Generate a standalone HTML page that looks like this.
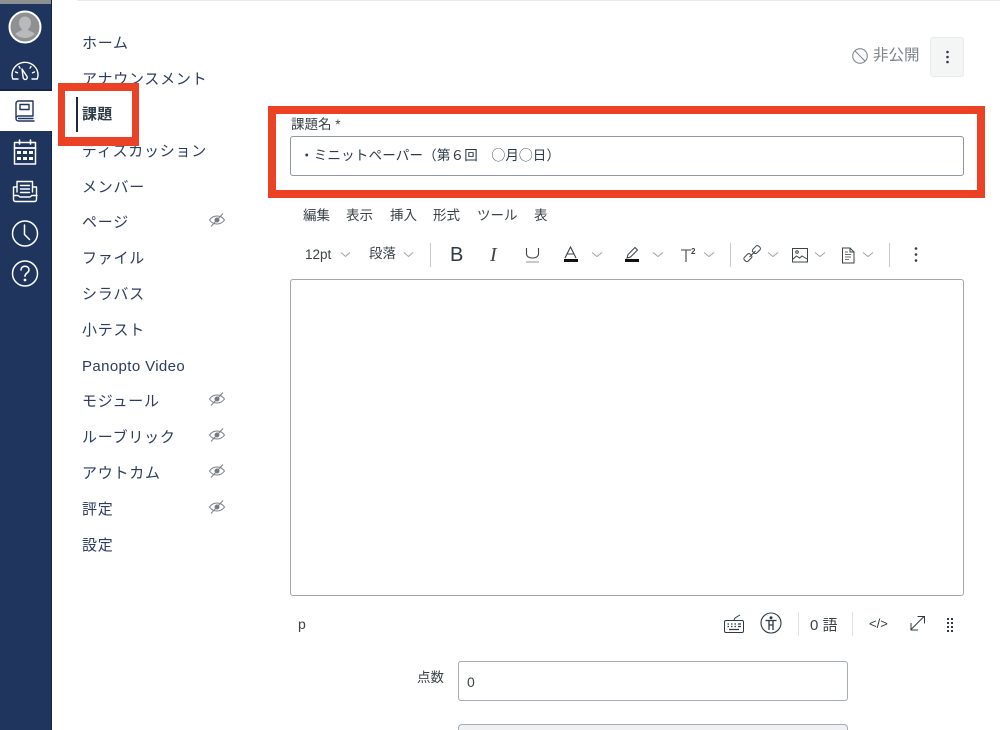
<!DOCTYPE html>
<html lang="ja">
<head>
<meta charset="utf-8">
<style>
html,body{margin:0;padding:0;background:#fff;width:1000px;height:730px;overflow:hidden;}
#w{position:absolute;left:0;top:0;width:1000px;height:730px;overflow:hidden;font-family:"Liberation Sans","Noto Sans CJK JP",sans-serif;}
.a{position:absolute;}
.sb{left:0;top:0;width:51px;height:730px;background:#20355d;border-right:1px solid #16264a;}
.nav{position:absolute;left:82px;font-size:15px;line-height:20px;color:#2d3b61;white-space:nowrap;letter-spacing:.75px;}
.m{position:absolute;top:207px;font-size:13.5px;line-height:18px;color:#3a4347;white-space:nowrap;}
.t{position:absolute;font-size:13px;line-height:18px;color:#3a4347;white-space:nowrap;}
.sep{position:absolute;background:#c4c8cc;width:1px;}
.inp{position:absolute;box-sizing:border-box;border:1px solid #a5acb5;border-radius:3px;background:#fff;}
svg{position:absolute;overflow:visible;}
</style>
</head>
<body>
<div id="w">
<div class="a" style="left:77px;top:0;width:923px;height:1px;background:#e8eaec"></div>

<div class="a sb"></div>
<div class="a" style="left:0;top:0;width:51px;height:4px;background:#8e8f90"></div>
<div class="a" style="left:0;top:89px;width:52px;height:2px;background:#16264a"></div>
<div class="a" style="left:0;top:91px;width:52px;height:40px;background:#fff"></div>

<svg style="left:0;top:0" width="52" height="300" fill="none" stroke="#fff" stroke-width="1.4" stroke-linecap="round" stroke-linejoin="round">
  <circle cx="25" cy="27" r="15.500" fill="#8f9092" stroke="#fff" stroke-width="2"/>
  <path d="M25 16.500c-3.800 0-6 2.900-6 6.500 0 2.500 1 4.500 2.800 5.800v1.500c-2.500 1-5 2-6.500 3.700 2.300 2.500 5.900 4 9.700 4s7.400-1.500 9.700-4c-1.500-1.700-4-2.700-6.500-3.700v-1.500c1.800-1.300 2.800-3.300 2.800-5.800 0-3.600-2.200-6.500-6-6.500z" fill="#b9babb" stroke="none"/>
  <path d="M18 79h-5.200c-.5-1.300-.8-2.700-.8-4 0-7 5.800-12.700 13-12.700S38 68 38 75c0 1.300-.3 2.700-.8 4H32"/>
  <path d="M22 69l5 7.500c.8 1.500-.3 3-1.700 3-1.500 0-2.300-1.200-2.200-2.500z" fill="#20355d"/>
  <path d="M15.500 72l2 .8M19 66.500l1 1.700M31 66.500l-1 1.700M34.500 72l-2 .8"/>
  <g stroke="#20355d">
    <path d="M16 118V103.500c0-1.400 1-2.500 2.500-2.500H33v15H18.500c-1.500 0-2.500 1-2.500 2.500s1 2.500 2.500 2.500H34"/>
    <path d="M20 104.500h9v5h-9z"/>
    <path d="M18.500 118.500H33"/>
  </g>
  <rect x="14.500" y="142.500" width="21" height="21.500" stroke-width="1.500"/>
  <path d="M14.500 148h21" stroke-width="1.800"/>
  <path d="M19.500 140v4M30.500 140v4" stroke-width="1.600"/>
  <g fill="#fff" stroke="none">
    <rect x="17" y="151" width="4" height="3"/><rect x="23" y="151" width="4" height="3"/><rect x="29" y="151" width="4" height="3"/>
    <rect x="17" y="157" width="4" height="3"/><rect x="23" y="157" width="4" height="3"/><rect x="29" y="157" width="4" height="3"/>
  </g>
  <path d="M17 192v-10.500h15.500V192"/>
  <path d="M20.500 185.500h9M20.500 189h9M20.500 192.500h9"/>
  <path d="M17 187h-3.500v12c0 1.500.8 2.500 2 2.500h19c1.200 0 2-1 2-2.500v-12H33"/>
  <path d="M13.500 195.500H18c1 0 1 1.500 2.500 1.500h9c1.500 0 1.500-1.500 2.500-1.500h5"/>
  <circle cx="25" cy="233.500" r="12.500" stroke-width="1.500"/>
  <path d="M24.500 225v9.500l5 5" stroke-width="1.500"/>
  <circle cx="25" cy="273.500" r="12.500" stroke-width="1.500"/>
  <path d="M21 270c0-2.300 1.800-3.800 4-3.800s4 1.400 4 3.500c0 3.300-4 3.300-4 6.500" stroke-width="1.500"/>
  <circle cx="25" cy="280" r=".7" fill="#fff"/>
</svg>

<div class="nav" style="top:34px">ホーム</div>
<div class="nav" style="top:70px">アナウンスメント</div>
<div class="a" style="left:76px;top:97px;width:2px;height:35px;background:#222b33"></div>
<div class="nav" style="top:105px;color:#2d3b45;font-weight:700;letter-spacing:.3px">課題</div>
<div class="nav" style="top:142px">ディスカッション</div>
<div class="nav" style="top:178px">メンバー</div>
<div class="nav" style="top:213px">ページ</div>
<div class="nav" style="top:249px">ファイル</div>
<div class="nav" style="top:285px">シラバス</div>
<div class="nav" style="top:321px">小テスト</div>
<div class="nav" style="top:357px;letter-spacing:.38px">Panopto Video</div>
<div class="nav" style="top:392px">モジュール</div>
<div class="nav" style="top:428px">ルーブリック</div>
<div class="nav" style="top:464px">アウトカム</div>
<div class="nav" style="top:500px">評定</div>
<div class="nav" style="top:536px">設定</div>

<svg style="left:0;top:0" width="240" height="530" fill="none" stroke="#7a8288" stroke-width="1">
  <g><path d="M209.500 220c2-2.800 4.500-4 7.500-4s5.500 1.200 7.500 4c-2 2.800-4.500 4-7.500 4s-5.500-1.200-7.500-4z"/><circle cx="217" cy="220" r="2" fill="#6a7278"/><path d="M211 226.500l12-13"/></g>
  <g transform="translate(0,179)"><path d="M209.500 220c2-2.800 4.500-4 7.500-4s5.500 1.200 7.500 4c-2 2.800-4.500 4-7.500 4s-5.500-1.200-7.500-4z"/><circle cx="217" cy="220" r="2" fill="#6a7278"/><path d="M211 226.500l12-13"/></g>
  <g transform="translate(0,215)"><path d="M209.500 220c2-2.800 4.500-4 7.500-4s5.500 1.200 7.500 4c-2 2.800-4.500 4-7.500 4s-5.500-1.200-7.500-4z"/><circle cx="217" cy="220" r="2" fill="#6a7278"/><path d="M211 226.500l12-13"/></g>
  <g transform="translate(0,251)"><path d="M209.500 220c2-2.800 4.500-4 7.500-4s5.500 1.200 7.500 4c-2 2.800-4.500 4-7.500 4s-5.500-1.200-7.500-4z"/><circle cx="217" cy="220" r="2" fill="#6a7278"/><path d="M211 226.500l12-13"/></g>
  <g transform="translate(0,287)"><path d="M209.500 220c2-2.800 4.500-4 7.500-4s5.500 1.200 7.500 4c-2 2.800-4.500 4-7.500 4s-5.500-1.200-7.500-4z"/><circle cx="217" cy="220" r="2" fill="#6a7278"/><path d="M211 226.500l12-13"/></g>
</svg>

<svg style="left:852px;top:48px" width="16" height="16" fill="none" stroke="#808a90" stroke-width="1.100"><circle cx="8" cy="8" r="7.300"/><path d="M3 3l10 10"/></svg>
<div class="a" style="left:873px;top:47px;font-size:15.500px;line-height:18px;color:#7c858b;white-space:nowrap">非公開</div>
<div class="a" style="left:930px;top:37px;width:34px;height:40px;box-sizing:border-box;background:#f4f5f5;border:1px solid #e8eaec;border-radius:3px"></div>
<svg style="left:930px;top:37px" width="34" height="40" fill="#2d3b45"><circle cx="17.500" cy="15" r="1.300"/><circle cx="17.500" cy="20" r="1.300"/><circle cx="17.500" cy="25" r="1.300"/></svg>

<div class="t" style="left:291px;top:116px;font-size:13.500px">課題名 *</div>
<div class="inp" style="left:290px;top:136px;width:674px;height:40px;border-color:#8f96a3"></div>
<div class="a" style="left:300px;top:146px;font-size:13.500px;letter-spacing:.2px;line-height:19px;color:#2d3b45;white-space:nowrap">・ミニットペーパー（第６回　◯月◯日）</div>

<div class="m" style="left:303px">編集</div>
<div class="m" style="left:346px">表示</div>
<div class="m" style="left:390px">挿入</div>
<div class="m" style="left:433px">形式</div>
<div class="m" style="left:477px">ツール</div>
<div class="m" style="left:534px">表</div>

<div class="t" style="left:305px;top:246px;font-size:13.500px">12pt</div>
<div class="t" style="left:369px;top:245px;font-size:13.500px">段落</div>
<div class="a" style="left:450px;top:243px;font-size:20px;line-height:24px;color:#2d3b45;font-family:'Liberation Sans',sans-serif">B</div>
<div class="a" style="left:490px;top:244px;font-size:20px;line-height:22px;color:#3a4347;font-family:'Liberation Serif',serif;font-style:italic">I</div>

<svg style="left:0;top:230px" width="1000" height="50" fill="none" stroke="#5e666c" stroke-width="1">
  <g stroke="#a0a5a9">
    <path d="M341 22.500l4.500 4 4.500-4M404 22.500l4.500 4 4.500-4M592 22.500l5 4 5-4M653 22.500l5 4 5-4M704 22.500l5 4 5-4M768 22.500l5 4 5-4M815 22.500l5 4 5-4M863 22.500l5 4 5-4"/>
  </g>
  <path d="M526.500 18v5.500c0 3 2.500 4.500 6 4.500s6-1.500 6-4.500V18" stroke="#3a4347" stroke-width="1.100"/>
  <path d="M526 32h13" stroke="#8a9096"/>
  <path d="M565 28l5.500-11 5.500 11M567 24h7" stroke="#3a4347" stroke-width="1.100"/>
  <rect x="564" y="29" width="14" height="3" fill="#111" stroke="none"/>
  <path d="M627 28l1-3.500 7-7 2.500 2.500-7 7z" stroke="#3a4347"/>
  <rect x="625" y="29" width="14" height="3" fill="#111" stroke="none"/>
  <path d="M681 20h10M686 20v12" stroke="#3a4347" stroke-width="1.100"/>
  <path d="M745.500 31l-1-1c-.8-.8-.8-2 0-2.800l3-3c.8-.8 2-.8 2.800 0l1 1c.8.800.8 2 0 2.800l-3 3c-.8.800-2 .8-2.800 0zM754 23l-1-1c-.8-.8-.8-2 0-2.800l3-3c.8-.8 2-.8 2.800 0l1 1c.8.800.8 2 0 2.800l-3 3c-.8.800-2 .8-2.800 0zM749.500 27l6-6" stroke="#3a4347"/>
  <rect x="792.500" y="18.500" width="15" height="13.500" stroke="#3a4347"/>
  <path d="M793 29l3.500-3 3 2 2.500-2 5 3" stroke="#3a4347"/>
  <circle cx="797" cy="22" r="1.300" stroke="#3a4347"/>
  <path d="M842.500 18h7.500l4 4v11h-11.500zM850 18v4h4" stroke="#3a4347"/>
  <path d="M845 22h3M845 24.500h6M845 27h6M845 29.500h4" stroke="#6a7278"/>
  <g fill="#2d3b45" stroke="none"><circle cx="916" cy="18.500" r="1.300"/><circle cx="916" cy="24.500" r="1.300"/><circle cx="916" cy="30.500" r="1.300"/></g>
</svg>
<div class="a" style="left:691px;top:247px;font-size:8px;line-height:9px;font-weight:700;color:#3a4347">2</div>
<div class="sep" style="left:430px;top:243px;height:24px"></div>
<div class="sep" style="left:730px;top:243px;height:24px"></div>
<div class="sep" style="left:889px;top:243px;height:24px"></div>

<div class="inp" style="left:290px;top:279px;width:674px;height:317px;border-color:#a3a8ae"></div>

<div class="a" style="left:298px;top:615px;font-size:14px;line-height:18px;color:#3a4347">p</div>

<svg style="left:700px;top:600px" width="280" height="50" fill="none" stroke="#2d3b45" stroke-width="1">
  <rect x="24.500" y="20.500" width="19" height="12" rx="1.500"/>
  <path d="M34 20l1-2 5-3"/>
  <path d="M27.500 24h1.500M31 24h1.500M34.500 24h1.500M38 24h3M27.500 26.500h1.500M31 26.500h1.500M34.500 26.500h1.500M38 26.500h3M29 29.500h10" stroke-width="1.300"/>
  <circle cx="71" cy="23" r="10" stroke-width="1.100"/>
  <circle cx="71" cy="17.700" r="1.500" fill="#2d3b45" stroke="none"/>
  <path d="M65.500 20.500h11M69 21v9M73 21v9M69 25h4" stroke-width="1.300"/>
  <path d="M211 29.500l13-13M217.500 16.500h7v7M211 23v7h7"/>
  <g fill="#2d3b45" stroke="none">
    <rect x="247" y="18" width="2" height="2"/><rect x="251" y="18" width="2" height="2"/>
    <rect x="247" y="22" width="2" height="2"/><rect x="251" y="22" width="2" height="2"/>
    <rect x="247" y="26" width="2" height="2"/><rect x="251" y="26" width="2" height="2"/>
    <rect x="247" y="30" width="2" height="2"/><rect x="251" y="30" width="2" height="2"/>
  </g>
</svg>
<div class="sep" style="left:798px;top:612px;height:24px;background:#dfe1e3"></div>
<div class="sep" style="left:852px;top:612px;height:24px;background:#dfe1e3"></div>
<div class="a" style="left:810px;top:616px;font-size:15px;line-height:20px;color:#3a4347;white-space:nowrap">0 語</div>
<div class="a" style="left:869px;top:615px;font-size:13px;line-height:18px;color:#2d3b45;white-space:nowrap">&lt;/&gt;</div>

<div class="t" style="left:417px;top:669px;font-size:13.500px">点数</div>
<div class="inp" style="left:458px;top:661px;width:390px;height:40px"></div>
<div class="a" style="left:467px;top:673px;font-size:14px;line-height:18px;color:#3a4347">0</div>
<div class="a" style="left:458px;top:724px;width:390px;height:20px;box-sizing:border-box;background:#f0f1f2;border:1px solid #a5acb5;border-radius:4px"></div>

<div class="a" style="left:58px;top:83px;width:81px;height:63px;box-sizing:border-box;border:solid #eb4124;border-width:8px 7px 9px 7px"></div>
<div class="a" style="left:268px;top:106px;width:717px;height:92px;box-sizing:border-box;border:8px solid #eb4124"></div>
</div>
</body>
</html>
